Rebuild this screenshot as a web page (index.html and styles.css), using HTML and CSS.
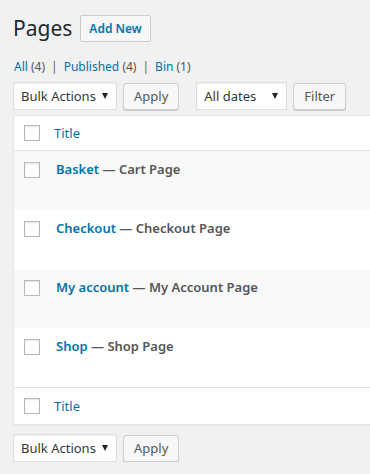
FILE: index.html
```html
<!DOCTYPE html>
<html lang="en">
<head>
    <meta charset="UTF-8">
    <title>Pages</title>
    <link rel="stylesheet" href="styles.css">
</head>
<body>
    <div class="wrap">
        <div class="title-row">
            <h1>Pages</h1>
            <a class="page-title-action" href="#">Add New</a>
        </div>

        <ul class="subsubsub">
            <li><a href="#">All <span class="count">(4)</span></a><span class="sep">|</span></li>
            <li><a href="#">Published <span class="count">(4)</span></a><span class="sep">|</span></li>
            <li><a href="#">Bin <span class="count">(1)</span></a></li>
        </ul>

        <div class="tablenav">
            <div class="select">Bulk Actions <span class="arrow"></span></div>
            <button class="button">Apply</button>
            <div class="select dates">All dates <span class="arrow"></span></div>
            <button class="button">Filter</button>
        </div>

        <div class="list-table">
            <div class="row head">
                <span class="check"></span>
                <a class="col-title" href="#">Title</a>
            </div>
            <div class="row page alt">
                <span class="check"></span>
                <div class="title"><a href="#">Basket</a> <span class="state">&mdash; Cart Page</span></div>
            </div>
            <div class="row page">
                <span class="check"></span>
                <div class="title"><a href="#">Checkout</a> <span class="state">&mdash; Checkout Page</span></div>
            </div>
            <div class="row page alt">
                <span class="check"></span>
                <div class="title"><a href="#">My account</a> <span class="state">&mdash; My Account Page</span></div>
            </div>
            <div class="row page">
                <span class="check"></span>
                <div class="title"><a href="#">Shop</a> <span class="state">&mdash; Shop Page</span></div>
            </div>
            <div class="row foot">
                <span class="check"></span>
                <a class="col-title" href="#">Title</a>
            </div>
        </div>

        <div class="tablenav bottom">
            <div class="select">Bulk Actions <span class="arrow"></span></div>
            <button class="button">Apply</button>
        </div>
    </div>
</body>
</html>
```

FILE: styles.css
```css
body {
    margin: 0;
    background: #f1f1f1;
    font-family: "Noto Sans", "Open Sans", sans-serif;
    font-size: 12px;
    color: #444;
}
a {
    color: #0073aa;
    text-decoration: none;
}
.wrap {
    padding: 0 0 0 13px;
    overflow: hidden;
}
.title-row {
    display: flex;
    align-items: center;
    height: 27px;
    padding-top: 15px;
}
h1 {
    margin: 0;
    font-size: 21px;
    font-weight: 400;
    color: #23282d;
    line-height: 27px;
}
.page-title-action {
    margin-left: 8px;
    height: 25px;
    line-height: 25px;
    padding: 0 8px;
    border: 1px solid #ccc;
    border-radius: 2px;
    background: #f7f7f7;
    font-weight: 600;
    font-size: 12px;
}
.subsubsub {
    list-style: none;
    margin: 16px 0 0 1px;
    padding: 0;
    display: flex;
    color: #666;
    line-height: 18px;
}
.subsubsub .count {
    color: #555;
}
.sep {
    margin: 0 6px;
    color: #666;
}
.tablenav {
    display: flex;
    align-items: center;
    height: 28px;
    margin-top: 6px;
}
.select {
    box-sizing: border-box;
    width: 104px;
    height: 28px;
    display: flex;
    align-items: center;
    justify-content: space-between;
    padding: 0 8px 0 7px;
    background: #fff;
    border: 1px solid #ddd;
    box-shadow: inset 0 1px 2px rgba(0, 0, 0, 0.07);
    color: #32373c;
    font-size: 13px;
    white-space: nowrap;
}
.select.dates {
    width: 91px;
    margin-left: 17px;
}
.arrow {
    width: 0;
    height: 0;
    border-left: 3px solid transparent;
    border-right: 3px solid transparent;
    border-top: 6px solid #222;
}
.button {
    box-sizing: border-box;
    height: 27px;
    margin-left: 6px;
    padding: 0 10px;
    border: 1px solid #ccc;
    border-radius: 3px;
    background: #f7f7f7;
    box-shadow: 0 1px 0 #ccc;
    color: #555;
    font-family: inherit;
    font-size: 13px;
}
.list-table {
    margin-top: 5px;
    width: calc(100% + 20px);
    background: #fff;
    border: 1px solid #e5e5e5;
    box-shadow: 0 1px 1px rgba(0, 0, 0, 0.04);
}
.row {
    display: flex;
    align-items: center;
    padding-left: 10px;
}
.check {
    box-sizing: border-box;
    width: 16px;
    height: 16px;
    border: 1px solid #b4b9be;
    background: #fff;
    box-shadow: inset 0 1px 2px rgba(0, 0, 0, 0.1);
    flex: none;
}
.row.head {
    height: 34px;
    border-bottom: 1px solid #e1e1e1;
}
.row.foot {
    height: 36px;
    border-top: 1px solid #e1e1e1;
}
.col-title {
    margin-left: 14px;
    font-size: 13px;
}
.row.page {
    height: 59px;
    align-items: flex-start;
    box-sizing: border-box;
    padding-top: 11px;
}
.row.alt {
    background: #f9f9f9;
}
.title {
    margin-left: 16px;
    margin-top: -3px;
    font-size: 13px;
    font-weight: 600;
    line-height: 20px;
}
.state {
    color: #555;
}
.tablenav.bottom {
    margin-top: 9px;
}
```
